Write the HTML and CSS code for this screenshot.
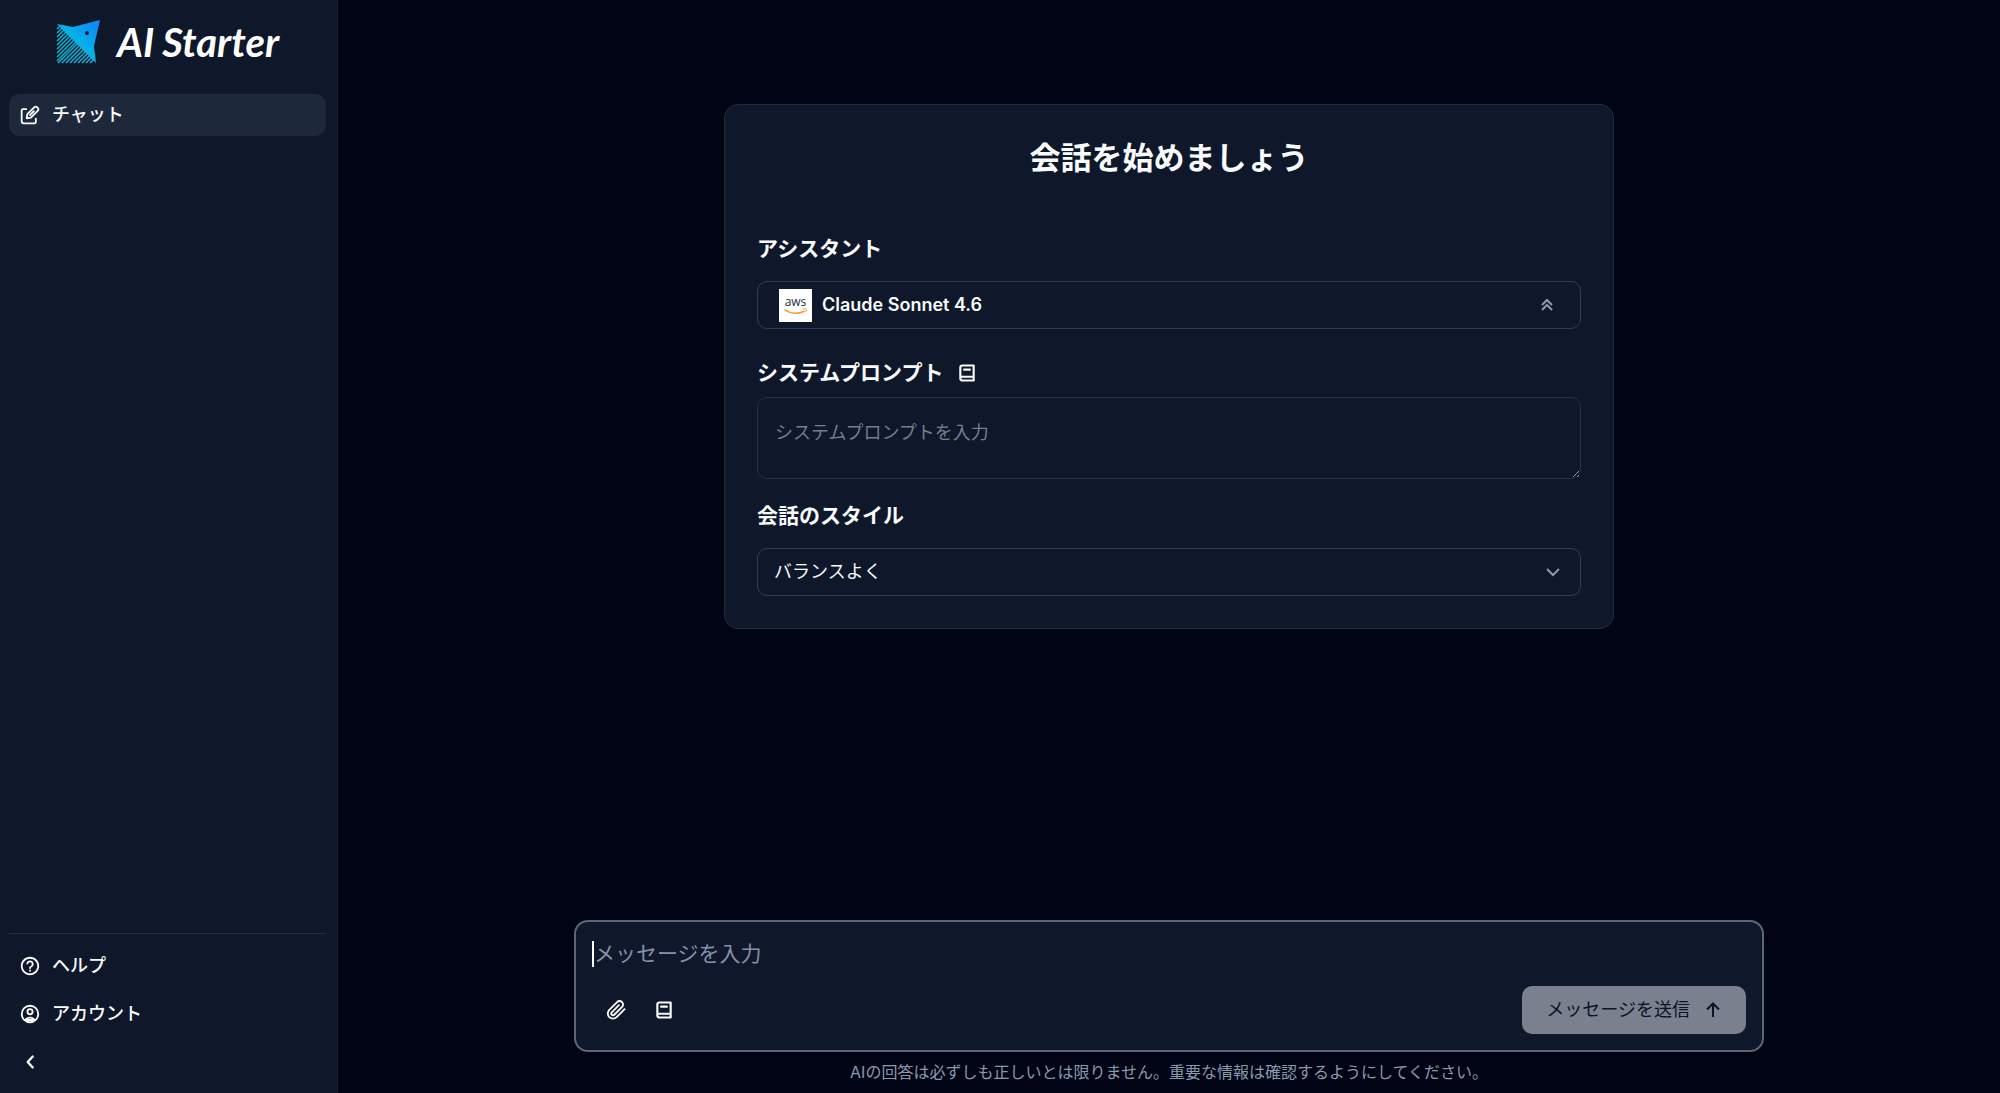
FILE: index.html
```html
<!DOCTYPE html>
<html lang="ja">
<head>
<meta charset="utf-8">
<meta name="viewport" content="width=device-width, initial-scale=1">
<title>AI Starter</title>
<link rel="stylesheet" href="styles.css">
</head>
<body>
<div class="app">
  <aside class="sidebar">
    <a class="brand" href="#">
      <svg class="brand-mark" viewBox="0 0 45 45" aria-hidden="true">
        <defs>
          <linearGradient id="kite" x1="1" y1="0" x2="0.3" y2="0.7">
            <stop offset="0.2" stop-color="#0a8dfa"/>
            <stop offset="0.8" stop-color="#06b8e4"/>
          </linearGradient>
        </defs>
        <path fill="url(#kite)" d="M1 4 L17 7 L44 0 L38 26 L40 43 Z"/>
        <path stroke="#12b3d6" stroke-width="1.5" fill="none" d="M1 9l3-3M1 13l5-5M1 17l7-7M1 21l9-9M1 25l11-11M1 29l13-13M1 33l15-15M1 37l17-17M1 41l19-19M2 43l20-20M6 43l18-18M10 43l16-16M14 43l14-14M18 43l12-12M22 43l10-10M26 43l8-8M30 43l6-6M34 43l4-4"/>
        <circle cx="31" cy="13" r="1.900" fill="#0b1228"/>
      </svg>
      <span class="brand-name"><span>AI</span><span>Starter</span></span>
    </a>
    <nav class="nav">
      <a class="nav-item active" href="#">
        <svg class="icon edit" viewBox="0 0 24 24" aria-hidden="true"><path class="line" d="M7.500 5H3.500a1.500 1.500 0 0 0-1.500 1.500V19.500A2.500 2.500 0 0 0 4.500 22H17.500a1.500 1.500 0 0 0 1.500-1.500V16.500M8 16l.8-5 8.200-8.200a2.500 2.500 0 0 1 3.500 0l.7.7a2.500 2.500 0 0 1 0 3.500L13 15.200zM12 12l4.500-4.500"/></svg>
        <span>チャット</span>
      </a>
    </nav>
    <nav class="nav nav-bottom">
      <a class="nav-item" href="#">
        <svg class="icon" viewBox="0 0 24 24" aria-hidden="true"><path d="M11 18h2v-2h-2v2zm1-16C6.480 2 2 6.480 2 12s4.480 10 10 10 10-4.480 10-10S17.520 2 12 2zm0 18c-4.410 0-8-3.590-8-8s3.590-8 8-8 8 3.590 8 8-3.590 8-8 8zm0-14c-2.210 0-4 1.790-4 4h2c0-1.100.9-2 2-2s2 .9 2 2c0 2-3 1.750-3 5h2c0-2.250 3-2.500 3-5 0-2.210-1.790-4-4-4z"/></svg>
        <span>ヘルプ</span>
      </a>
      <a class="nav-item" href="#">
        <svg class="icon" viewBox="0 0 24 24" aria-hidden="true"><circle class="line" cx="12" cy="12" r="9"/><circle class="line" cx="12" cy="9.500" r="2.800"/><path class="line" d="M6.500 18.500c1.400-1.700 3.300-2.500 5.500-2.500s4.100.8 5.500 2.500z"/></svg>
        <span>アカウント</span>
      </a>
      <button class="nav-item" type="button" aria-label="サイドバーを閉じる">
        <svg class="icon" viewBox="0 0 24 24" aria-hidden="true"><path class="line bold" d="M15 6l-5.500 6 5.500 6"/></svg>
      </button>
    </nav>
  </aside>

  <main class="main">
    <section class="start">
      <div class="card">
        <h1>会話を始めましょう</h1>
        <div class="field">
          <span class="label" id="assistant-label">アシスタント</span>
          <button class="control assistant" type="button" aria-labelledby="assistant-label assistant-name">
            <span class="aws" aria-hidden="true">
              <span class="aws-text">aws</span>
              <svg viewBox="0 0 24 7"><path d="M1 1.500c6 4.600 14.500 4.800 20 1.500" fill="none" stroke="#f79a2b" stroke-width="1.500"/><path d="M19.500 1.200c1.500-.5 3-.4 3.300 0s-.1 2-1.100 3" fill="none" stroke="#f79a2b" stroke-width="1"/></svg>
            </span>
            <span class="assistant-name" id="assistant-name">Claude Sonnet 4.6</span>
            <svg class="chevron" viewBox="0 0 18 18" aria-hidden="true"><path d="M4 9l5-5 5 5M4 14l5-5 5 5"/></svg>
          </button>
        </div>
        <div class="field prompt-field">
          <div class="label-row">
            <label class="label" for="system-prompt">システムプロンプト</label>
            <button class="book-button" type="button" aria-label="プロンプト集">
              <svg class="icon book" viewBox="0 0 24 24" aria-hidden="true"><path class="line" d="M20 16.500V3H6.500A2.500 2.500 0 0 0 4 5.500V18.500A2.500 2.500 0 0 0 6.500 21H20V16.500H6a2 2 0 0 0-2 2M8.500 8h7"/></svg>
            </button>
          </div>
          <textarea class="control system-prompt" id="system-prompt" rows="1" placeholder="システムプロンプトを入力"></textarea>
        </div>
        <div class="field">
          <label class="label" for="style">会話のスタイル</label>
          <div class="select-wrap">
            <select class="control" id="style">
              <option>バランスよく</option>
            </select>
            <svg class="chevron" viewBox="0 0 18 18" aria-hidden="true"><path d="M3 6l6 6 6-6"/></svg>
          </div>
        </div>
      </div>
    </section>

    <form class="composer">
      <div class="message">
        <textarea rows="1" aria-label="メッセージ" placeholder="メッセージを入力"></textarea>
      </div>
      <div class="toolbar">
        <button class="tool" type="button" aria-label="ファイルを添付">
          <svg class="icon" viewBox="0 0 24 24" aria-hidden="true"><path class="line" d="M21.400 11.100l-8.700 8.700a5.600 5.600 0 0 1-8-8l8.500-8.500a3.800 3.800 0 0 1 5.400 5.400l-8.500 8.500a1.900 1.900 0 0 1-2.700-2.700l7.800-7.800"/></svg>
        </button>
        <button class="tool" type="button" aria-label="プロンプト集">
          <svg class="icon book" viewBox="0 0 24 24" aria-hidden="true"><path class="line" d="M20 16.500V3H6.500A2.500 2.500 0 0 0 4 5.500V18.500A2.500 2.500 0 0 0 6.500 21H20V16.500H6a2 2 0 0 0-2 2M8.500 8h7"/></svg>
        </button>
        <button class="send" type="button">
          <span>メッセージを送信</span>
          <svg class="arrow" viewBox="0 0 18 18" aria-hidden="true"><path d="M9 16V3M3 8.500L9 2.500l6 6"/></svg>
        </button>
      </div>
    </form>
    <p class="notice">AIの回答は必ずしも正しいとは限りません。重要な情報は確認するようにしてください。</p>
  </main>
</div>
</body>
</html>
```
FILE: styles.css
```css
:root {
  color-scheme: dark;
  --bg: #010414;
  --panel: #0f172a;
  --active: #1d293b;
  --line: #212c3c;
  --control-line: #323d4d;
  --text: #f8fafc;
  --muted: #8b99ae;
}

*,
*::before {
  box-sizing: border-box;
}

body {
  margin: 0;
  background: var(--bg);
  color: var(--text);
  font: 18px/28px Inter, "Noto Sans CJK JP", sans-serif;
}

button,
select,
textarea {
  margin: 0;
  font: inherit;
  color: inherit;
}

button {
  border: 0;
  background: none;
  cursor: pointer;
}

.app {
  display: flex;
  min-height: 100vh;
}

/* Sidebar */
.sidebar {
  display: flex;
  flex-direction: column;
  flex: 0 0 338px;
  padding: 12px 11px 10px 9px;
  border-right: 1px solid #172033;
  background: var(--panel);
}

.brand {
  display: flex;
  align-items: center;
  justify-content: center;
  gap: 16px;
  height: 60px;
  margin-bottom: 22px;
  color: #fff;
  text-decoration: none;
}

.brand-mark {
  width: 45px;
  height: 45px;
}

.brand-name {
  display: flex;
  gap: 8px;
  font: italic 700 40px/60px Lato, sans-serif;
}

.nav {
  display: flex;
  flex-direction: column;
  gap: 6px;
}

.nav-bottom {
  margin-top: auto;
  padding-top: 11px;
  border-top: 1px solid #222d3e;
}

.nav-item {
  display: flex;
  align-items: center;
  gap: 11px;
  height: 42px;
  padding: 0 10px;
  border-radius: 10px;
  color: var(--text);
  font-weight: 500;
  text-decoration: none;
}

.nav-item.active {
  background: var(--active);
}

.icon {
  flex: none;
  width: 22px;
  height: 22px;
  fill: currentColor;
}

.icon .line {
  fill: none;
  stroke: currentColor;
  stroke-width: 2;
  stroke-linecap: round;
  stroke-linejoin: round;
}

.icon .bold {
  stroke-width: 2.5;
}

.icon.edit,
.icon.book {
  width: 20px;
  height: 20px;
}

.icon.edit {
  margin: 0 1px;
}

.icon.edit .line {
  stroke-width: 2.2;
}

.icon.book .line {
  stroke-width: 2.6;
}

/* Main column */
.main {
  display: flex;
  flex: 1;
  flex-direction: column;
  align-items: center;
  min-width: 0;
  padding: 0 24px 9px;
}

.start {
  flex: 1;
  width: 100%;
  max-width: 890px;
  padding: 104px 0 32px;
}

.card {
  padding: 32px;
  border: 1px solid var(--line);
  border-radius: 14px;
  background: var(--panel);
}

h1 {
  margin: 0 0 54px;
  font-size: 31px;
  line-height: 42px;
  font-weight: 700;
  text-align: center;
}

.field {
  display: flex;
  flex-direction: column;
  gap: 16px;
}

.label {
  font-size: 21px;
  line-height: 32px;
  font-weight: 700;
}

.label-row {
  display: flex;
  align-items: center;
  gap: 14px;
}

.book-button {
  display: flex;
  padding: 0;
}

.prompt-field {
  gap: 8px;
  margin: 28px 0 21px;
}

.control {
  width: 100%;
  min-height: 48px;
  padding: 0 16px;
  border: 1px solid var(--control-line);
  border-radius: 10px;
  background: var(--panel);
  outline: 0;
}

.assistant {
  display: flex;
  align-items: center;
  gap: 10px;
  padding: 0 24px 0 21px;
  text-align: left;
}

.assistant-name {
  flex: 1;
  font-weight: 600;
}

.aws {
  display: flex;
  flex-direction: column;
  align-items: center;
  justify-content: center;
  width: 33px;
  height: 33px;
  background: #fff;
}

.aws-text {
  color: #252f3e;
  font: 500 12px/12px "Open Sans", sans-serif;
}

.aws svg {
  width: 25px;
  height: 7px;
}

.system-prompt {
  display: block;
  min-height: 82px;
  padding: 21px 17px;
  border-color: #273242;
  resize: vertical;
}

.system-prompt::placeholder {
  color: #747e8d;
}

.select-wrap {
  display: grid;
  align-items: center;
}

.select-wrap > * {
  grid-area: 1 / 1;
}

.select-wrap select {
  appearance: none;
}

.select-wrap .chevron {
  justify-self: end;
  margin-right: 19px;
  pointer-events: none;
}

.chevron,
.arrow {
  flex: none;
  width: 18px;
  height: 18px;
  fill: none;
  stroke: #9099a8;
  stroke-width: 2;
}

/* Message composer */
.composer {
  display: flex;
  flex-direction: column;
  gap: 16px;
  width: 100%;
  max-width: 1190px;
  padding: 16px;
  border: 2px solid #5d6676;
  border-radius: 14px;
  background: var(--panel);
}

.message {
  display: flex;
  align-items: center;
}

.message::before {
  content: "";
  width: 2px;
  height: 26px;
  background: #fff;
}

.message textarea {
  flex: 1;
  height: 32px;
  padding: 0;
  border: 0;
  outline: 0;
  background: none;
  font-size: 21px;
  line-height: 32px;
  resize: none;
}

.message textarea::placeholder {
  color: #8492a9;
}

.toolbar {
  display: flex;
  align-items: center;
}

.tool {
  display: flex;
  align-items: center;
  justify-content: center;
  width: 48px;
  height: 48px;
  padding: 0;
}

.send {
  display: flex;
  align-items: center;
  justify-content: center;
  gap: 14px;
  height: 48px;
  margin-left: auto;
  padding: 0 24px;
  border-radius: 10px;
  background: #7a808e;
  color: #0c1328;
}

.arrow {
  stroke: currentColor;
}

.notice {
  margin: 8px 0 0;
  color: var(--muted);
  font-size: 16px;
  line-height: 24px;
}
```
